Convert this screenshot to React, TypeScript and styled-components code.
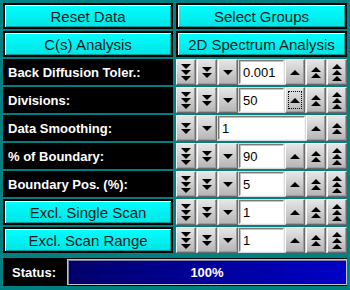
import React from 'react';
import styled, { createGlobalStyle } from 'styled-components';

const GlobalStyle = createGlobalStyle`
  html, body {
    margin: 0;
    padding: 0;
    background: #008080;
  }
  body {
    font-family: "Liberation Sans", Arial, sans-serif;
  }
`;

const Panel = styled.div`
  width: 350px;
  height: 290px;
  box-sizing: border-box;
  padding: 3px;
  background: #008080;
  display: grid;
  grid-template-columns: 170px 171px;
  grid-auto-rows: 26px;
  column-gap: 3px;
  row-gap: 2px;
`;

const ActionButton = styled.button`
  box-sizing: border-box;
  margin: 0;
  padding: 0;
  height: 26px;
  border: 2px solid #000;
  background: linear-gradient(#00ffff, #00e4e4);
  box-shadow: inset 1px 1px 0 #ffffff, inset -1px -1px 0 #009a9a;
  font-family: "Liberation Sans", Arial, sans-serif;
  font-size: 15px;
  color: #0c1a1a;
  cursor: pointer;
`;

const Label = styled.div`
  box-sizing: border-box;
  background: #000;
  color: #fff;
  font-weight: bold;
  font-size: 13px;
  display: flex;
  align-items: center;
  padding-left: 5px;
`;

const SpinRow = styled.div`
  display: flex;
  gap: 1px;
  background: #d8d8d8;
`;

const StepButton = styled.button<{ $focused?: boolean }>`
  position: relative;
  box-sizing: border-box;
  flex: 0 0 20px;
  width: 20px;
  margin: 0;
  padding: 0;
  display: flex;
  align-items: center;
  justify-content: center;
  border: 1px solid;
  border-color: #ffffff #6a6a6a #6a6a6a #ffffff;
  background: linear-gradient(#e6e6e6, #b4b4b4);
  box-shadow: inset -1px -1px 0 #9c9c9c;
  cursor: pointer;

  &::after {
    content: '';
    display: ${p => (p.$focused ? 'block' : 'none')};
    position: absolute;
    inset: 3px 2px 3px 2px;
    border: 1px dotted #000;
  }
`;

const Field = styled.input`
  box-sizing: border-box;
  flex: 1 1 auto;
  min-width: 0;
  margin: 1px 0;
  padding: 0 3px;
  border: 1px solid;
  border-color: #7a7a7a #f4f4f4 #f4f4f4 #7a7a7a;
  box-shadow: inset 1px 1px 0 #c0c0c0;
  background: #fff;
  font-family: "Liberation Sans", Arial, sans-serif;
  font-size: 13px;
  color: #000;
  outline: none;
`;

const StatusRow = styled.div`
  grid-column: 1 / span 2;
  margin-top: 3px;
  height: 28px;
  display: flex;
  background: #000;
`;

const StatusLabel = styled.div`
  width: 64px;
  box-sizing: border-box;
  padding-left: 9px;
  display: flex;
  align-items: center;
  color: #fff;
  font-weight: bold;
  font-size: 13px;
`;

const ProgressBar = styled.div`
  flex: 1;
  margin: 1px 0 1px 0;
  box-sizing: border-box;
  border: 1px solid #c4c4c4;
  box-shadow: inset 1px 1px 0 #7c7c9c;
  background: linear-gradient(to right, #00006c, #0000c8);
  display: flex;
  align-items: center;
  justify-content: center;
  color: #fff;
  font-weight: bold;
  font-size: 13px;
`;

type Dir = 'up' | 'down';

// stacked black triangles, like the old AWT step buttons
function Arrows({ dir, count }: { dir: Dir; count: number }) {
  const pitch = 6;
  const h = (count - 1) * pitch + 5;
  const tris = [];
  for (let i = 0; i < count; i++) {
    const y = i * pitch;
    const pts =
      dir === 'down'
        ? `0,${y} 10,${y} 5,${y + 5}`
        : `0,${y + 5} 10,${y + 5} 5,${y}`;
    tris.push(<polygon key={i} points={pts} fill="#000" />);
  }
  return (
    <svg width="10" height={h} viewBox={`0 0 10 ${h}`}>
      {tris}
    </svg>
  );
}

function Spinner({ value, levels = 3, focusUp = false }: { value: string; levels?: number; focusUp?: boolean }) {
  const downs = Array.from({ length: levels }, (_, i) => levels - i);
  const ups = Array.from({ length: levels }, (_, i) => i + 1);
  return (
    <SpinRow>
      {downs.map(n => (
        <StepButton key={'d' + n}>
          <Arrows dir="down" count={n} />
        </StepButton>
      ))}
      <Field defaultValue={value} />
      {ups.map(n => (
        <StepButton key={'u' + n} $focused={focusUp && n === 1}>
          <Arrows dir="up" count={n} />
        </StepButton>
      ))}
    </SpinRow>
  );
}

export default function App() {
  return (
    <>
      <GlobalStyle />
      <Panel>
        <ActionButton>Reset Data</ActionButton>
        <ActionButton>Select Groups</ActionButton>
        <ActionButton>C(s) Analysis</ActionButton>
        <ActionButton>2D Spectrum Analysis</ActionButton>

        <Label>Back Diffusion Toler.:</Label>
        <Spinner value="0.001" />

        <Label>Divisions:</Label>
        <Spinner value="50" focusUp />

        <Label>Data Smoothing:</Label>
        <Spinner value="1" levels={2} />

        <Label>% of Boundary:</Label>
        <Spinner value="90" />

        <Label>Boundary Pos. (%):</Label>
        <Spinner value="5" />

        <ActionButton>Excl. Single Scan</ActionButton>
        <Spinner value="1" />

        <ActionButton>Excl. Scan Range</ActionButton>
        <Spinner value="1" />

        <StatusRow>
          <StatusLabel>Status:</StatusLabel>
          <ProgressBar>100%</ProgressBar>
        </StatusRow>
      </Panel>
    </>
  );
}
